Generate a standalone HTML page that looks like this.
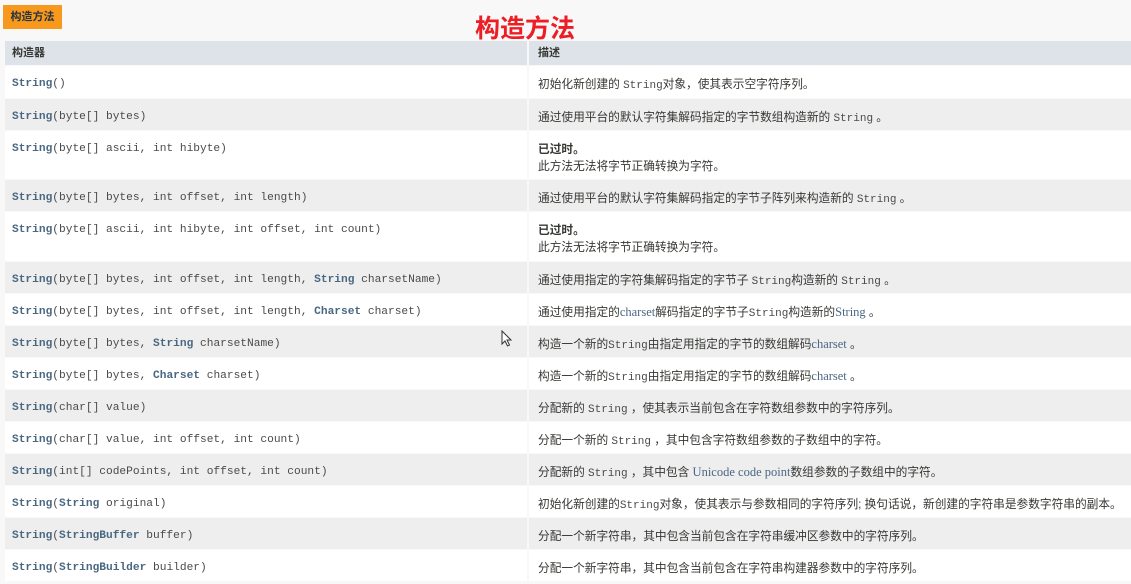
<!DOCTYPE html>
<html><head><meta charset="utf-8"><style>
*{margin:0;padding:0;box-sizing:border-box}
body{width:1131px;height:584px;background:#f8f8f8;position:relative;overflow:hidden;font-family:"Liberation Sans","Noto Sans CJK SC",sans-serif;color:#353833}
.tab{position:absolute;left:3px;top:5px;width:59px;height:24px;background:#f8981d;font-size:11px;font-weight:bold;color:#253441;line-height:24px;text-align:center}
.title{position:absolute;left:475px;top:10px;font-size:25px;font-weight:bold;color:#ee1c25;font-family:"Noto Sans CJK SC",sans-serif;line-height:34px}
.r{position:absolute;left:5px;width:1126px}
.c1,.c2{position:absolute;top:0;bottom:0}
.c1{left:0;width:522px;padding-left:7px}
.c2{left:524px;right:0;padding-left:9px}
.w .c1,.w .c2{background:#fff}
.g .c1,.g .c2{background:#eeeeef}
.h .c1,.h .c2{background:#dee3e9;font-size:11px;font-weight:bold;line-height:24px;color:#353833}
code{font-family:"Liberation Mono",monospace;font-size:11.2px;color:#4a4a4a}
.c1 code{display:block;padding-top:11px;line-height:14px}
b.s{color:#4a6782;font-weight:bold}
.c2 .t{font-size:11.7px;padding-top:10px;line-height:17px;color:#353833;white-space:nowrap}
.c2 code{color:#4a4a4a;font-size:11px}
.lk{color:#4a6782;font-family:"Liberation Serif",serif;font-size:12.5px}
</style></head><body>
<div class="tab">构造方法</div>
<div class="title">构造方法</div>
<div class="r h" style="top:41px;height:24px"><div class="c1">构造器</div><div class="c2">描述</div></div>

<div class="r w" style="top:66px;height:32px"><div class="c1"><code><b class="s">String</b>()</code></div><div class="c2"><div class="t">初始化新创建的 <code>String</code>对象，使其表示空字符序列。</div></div></div>
<div class="r g" style="top:99px;height:31px"><div class="c1"><code><b class="s">String</b>(byte[] bytes)</code></div><div class="c2"><div class="t">通过使用平台的默认字符集解码指定的字节数组构造新的 <code>String</code> 。</div></div></div>
<div class="r w" style="top:131px;height:48px"><div class="c1"><code><b class="s">String</b>(byte[] ascii, int hibyte)</code></div><div class="c2"><div class="t"><b>已过时。</b><br>此方法无法将字节正确转换为字符。</div></div></div>
<div class="r g" style="top:180px;height:31px"><div class="c1"><code><b class="s">String</b>(byte[] bytes, int offset, int length)</code></div><div class="c2"><div class="t">通过使用平台的默认字符集解码指定的字节子阵列来构造新的 <code>String</code> 。</div></div></div>
<div class="r w" style="top:212px;height:49px"><div class="c1"><code><b class="s">String</b>(byte[] ascii, int hibyte, int offset, int count)</code></div><div class="c2"><div class="t"><b>已过时。</b><br>此方法无法将字节正确转换为字符。</div></div></div>
<div class="r g" style="top:262px;height:31px"><div class="c1"><code><b class="s">String</b>(byte[] bytes, int offset, int length, <b class="s">String</b> charsetName)</code></div><div class="c2"><div class="t">通过使用指定的字符集解码指定的字节子 <code>String</code>构造新的 <code>String</code> 。</div></div></div>
<div class="r w" style="top:294px;height:31px"><div class="c1"><code><b class="s">String</b>(byte[] bytes, int offset, int length, <b class="s">Charset</b> charset)</code></div><div class="c2"><div class="t">通过使用指定的<span class="lk">charset</span>解码指定的字节子<code>String</code>构造新的<span class="lk">String</span> 。</div></div></div>
<div class="r g" style="top:326px;height:31px"><div class="c1"><code><b class="s">String</b>(byte[] bytes, <b class="s">String</b> charsetName)</code></div><div class="c2"><div class="t">构造一个新的<code>String</code>由指定用指定的字节的数组解码<span class="lk">charset</span> 。</div></div></div>
<div class="r w" style="top:358px;height:31px"><div class="c1"><code><b class="s">String</b>(byte[] bytes, <b class="s">Charset</b> charset)</code></div><div class="c2"><div class="t">构造一个新的<code>String</code>由指定用指定的字节的数组解码<span class="lk">charset</span> 。</div></div></div>
<div class="r g" style="top:390px;height:31px"><div class="c1"><code><b class="s">String</b>(char[] value)</code></div><div class="c2"><div class="t">分配新的 <code>String</code> ，使其表示当前包含在字符数组参数中的字符序列。</div></div></div>
<div class="r w" style="top:422px;height:31px"><div class="c1"><code><b class="s">String</b>(char[] value, int offset, int count)</code></div><div class="c2"><div class="t">分配一个新的 <code>String</code> ，其中包含字符数组参数的子数组中的字符。</div></div></div>
<div class="r g" style="top:454px;height:31px"><div class="c1"><code><b class="s">String</b>(int[] codePoints, int offset, int count)</code></div><div class="c2"><div class="t">分配新的 <code>String</code> ，其中包含 <span class="lk">Unicode code point</span>数组参数的子数组中的字符。</div></div></div>
<div class="r w" style="top:486px;height:31px"><div class="c1"><code><b class="s">String</b>(<b class="s">String</b> original)</code></div><div class="c2"><div class="t">初始化新创建的<code>String</code>对象，使其表示与参数相同的字符序列; 换句话说，新创建的字符串是参数字符串的副本。</div></div></div>
<div class="r g" style="top:518px;height:31px"><div class="c1"><code><b class="s">String</b>(<b class="s">StringBuffer</b> buffer)</code></div><div class="c2"><div class="t">分配一个新字符串，其中包含当前包含在字符串缓冲区参数中的字符序列。</div></div></div>
<div class="r w" style="top:550px;height:31px"><div class="c1"><code><b class="s">String</b>(<b class="s">StringBuilder</b> builder)</code></div><div class="c2"><div class="t">分配一个新字符串，其中包含当前包含在字符串构建器参数中的字符序列。</div></div></div>

<svg style="position:absolute;left:501px;top:330px" width="12" height="18" viewBox="0 0 12 18"><path d="M1 1 L1 14 L4 11 L6.5 16 L8.5 15 L6 10 L10 10 Z" fill="#fff" stroke="#333" stroke-width="1"/></svg>
</body></html>
